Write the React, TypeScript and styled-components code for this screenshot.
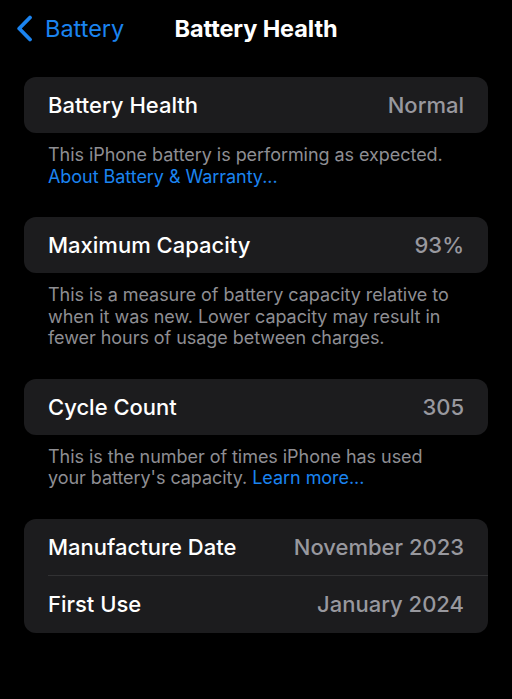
import * as React from 'react';
import styled, { createGlobalStyle } from 'styled-components';

const Global = createGlobalStyle`
  html, body {
    margin: 0;
    padding: 0;
    background: #000;
  }
  body {
    font-family: Inter, "Noto Sans", "Liberation Sans", sans-serif;
    -webkit-font-smoothing: antialiased;
  }
`;

const Page = styled.div`
  width: 512px;
  min-height: 699px;
  background: #000;
  color: #fff;
`;

const NavBar = styled.header`
  position: relative;
  display: flex;
  align-items: center;
  height: 56px;
  padding: 0 16px;
`;

const BackButton = styled.a`
  display: flex;
  align-items: center;
  gap: 12px;
  color: #1b84f0;
  font-size: 23.5px;
  font-weight: 400;
  text-decoration: none;
  z-index: 1;
`;

const Title = styled.h1`
  position: absolute;
  left: 0;
  right: 0;
  margin: 0;
  text-align: center;
  font-size: 23.5px;
  font-weight: 700;
  letter-spacing: -0.1px;
`;

const Content = styled.main`
  padding: 21px 24px 0;
`;

const Card = styled.section`
  background: #1c1c1e;
  border-radius: 12px;
  overflow: hidden;
`;

const Row = styled.div<{ $divider?: boolean; $tall?: boolean }>`
  display: flex;
  justify-content: space-between;
  align-items: center;
  height: ${(p) => (p.$tall ? 57 : 56)}px;
  padding: 0 24px;
  font-size: 22px;
  font-weight: 500;
  position: relative;
  ${(p) =>
    p.$divider &&
    `
    &::after {
      content: '';
      position: absolute;
      left: 24px;
      right: 0;
      bottom: 0;
      height: 1px;
      background: #313133;
    }
  `}
`;

const Label = styled.span`
  color: #fff;
`;

const Value = styled.span`
  color: #98989e;
`;

const Footer = styled.p`
  margin: 0;
  padding: 11px 24px 30px;
  color: #8e8e93;
  font-size: 18px;
  line-height: 21.5px;
  letter-spacing: -0.05px;
`;

const Link = styled.a`
  color: #1b84f0;
  text-decoration: none;
`;

const Chevron = () => (
  <svg width="17" height="27" viewBox="0 0 17 27" fill="none">
    <path
      d="M14 2.5L3.2 13.5L14 24.5"
      stroke="#1b84f0"
      strokeWidth="3.8"
      strokeLinecap="round"
      strokeLinejoin="round"
    />
  </svg>
);

export default function App() {
  return (
    <Page>
      <Global />
      <NavBar>
        <BackButton href="#">
          <Chevron />
          Battery
        </BackButton>
        <Title>Battery Health</Title>
      </NavBar>
      <Content>
        <Card>
          <Row>
            <Label>Battery Health</Label>
            <Value>Normal</Value>
          </Row>
        </Card>
        <Footer>
          This iPhone battery is performing as expected.
          <br />
          <Link href="#">About Battery &amp; Warranty...</Link>
        </Footer>

        <Card>
          <Row>
            <Label>Maximum Capacity</Label>
            <Value>93%</Value>
          </Row>
        </Card>
        <Footer>
          This is a measure of battery capacity relative to when it was new. Lower capacity may
          result in fewer hours of usage between charges.
        </Footer>

        <Card>
          <Row>
            <Label>Cycle Count</Label>
            <Value>305</Value>
          </Row>
        </Card>
        <Footer>
          This is the number of times iPhone has used your battery's capacity.{' '}
          <Link href="#">Learn more...</Link>
        </Footer>

        <Card>
          <Row $divider $tall>
            <Label>Manufacture Date</Label>
            <Value>November 2023</Value>
          </Row>
          <Row $tall>
            <Label>First Use</Label>
            <Value>January 2024</Value>
          </Row>
        </Card>
      </Content>
    </Page>
  );
}
